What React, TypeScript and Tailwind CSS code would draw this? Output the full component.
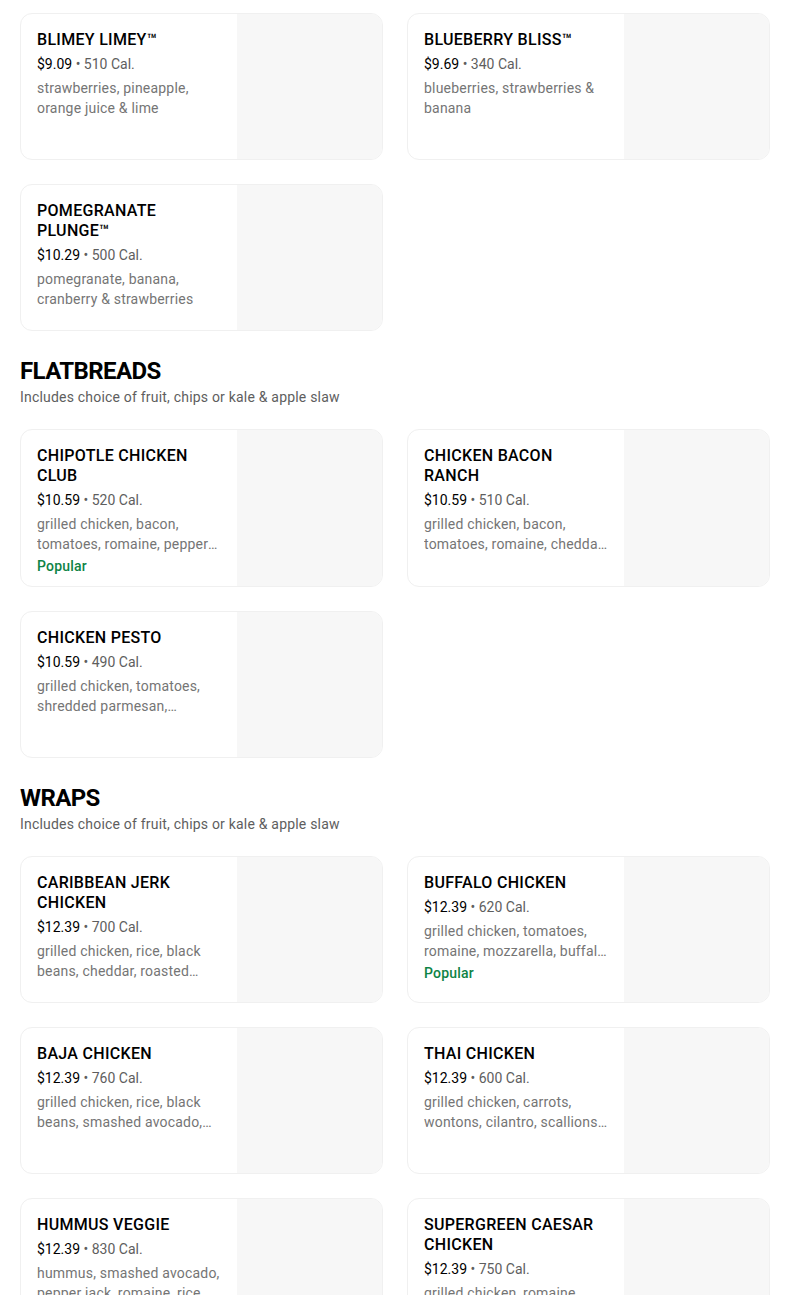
import React from "react";

type Item = { name: string; price: string; cal: string; desc: string; popular?: boolean };

const smoothies: Item[] = [
  { name: "BLIMEY LIMEY™", price: "$9.09", cal: "510 Cal.", desc: "strawberries, pineapple, orange juice & lime" },
  { name: "BLUEBERRY BLISS™", price: "$9.69", cal: "340 Cal.", desc: "blueberries, strawberries & banana" },
  { name: "POMEGRANATE PLUNGE™", price: "$10.29", cal: "500 Cal.", desc: "pomegranate, banana, cranberry & strawberries" },
];

const flatbreads: Item[] = [
  { name: "CHIPOTLE CHICKEN CLUB", price: "$10.59", cal: "520 Cal.", desc: "grilled chicken, bacon, tomatoes, romaine, pepper jack, chipotle mayo", popular: true },
  { name: "CHICKEN BACON RANCH", price: "$10.59", cal: "510 Cal.", desc: "grilled chicken, bacon, tomatoes, romaine, cheddar, ranch dressing" },
  { name: "CHICKEN PESTO", price: "$10.59", cal: "490 Cal.", desc: "grilled chicken, tomatoes, shredded parmesan, mozzarella, basil pesto" },
];

const wraps: Item[] = [
  { name: "CARIBBEAN JERK CHICKEN", price: "$12.39", cal: "700 Cal.", desc: "grilled chicken, rice, black beans, cheddar, roasted corn, jerk sauce" },
  { name: "BUFFALO CHICKEN", price: "$12.39", cal: "620 Cal.", desc: "grilled chicken, tomatoes, romaine, mozzarella, buffalo sauce, ranch", popular: true },
  { name: "BAJA CHICKEN", price: "$12.39", cal: "760 Cal.", desc: "grilled chicken, rice, black beans, smashed avocado, pico de gallo" },
  { name: "THAI CHICKEN", price: "$12.39", cal: "600 Cal.", desc: "grilled chicken, carrots, wontons, cilantro, scallions, thai peanut sauce" },
  { name: "HUMMUS VEGGIE", price: "$12.39", cal: "830 Cal.", desc: "hummus, smashed avocado, pepper jack, romaine, rice, cucumbers" },
  { name: "SUPERGREEN CAESAR CHICKEN", price: "$12.39", cal: "750 Cal.", desc: "grilled chicken, romaine, kale, parmesan, caesar dressing" },
];

function Card({ item }: { item: Item }) {
  return (
    <div className="flex min-h-[147px] overflow-hidden rounded-xl border border-[#f0f0f0] bg-white">
      <div className="flex min-w-0 flex-1 flex-col pl-4 pr-4 pt-4 pb-[10px]">
        <div className="text-[16px] font-medium leading-5 tracking-[0.3px] text-black">{item.name}</div>
        <div className="mt-1 text-[14px] leading-5">
          <span className="text-black">{item.price}</span>
          <span className="text-[#5e5e5e]"> • {item.cal}</span>
        </div>
        <div className="mt-1 line-clamp-2 text-[14px] leading-5 tracking-[0.2px] text-[#757575]">{item.desc}</div>
        {item.popular && (
          <div className="mt-0.5 text-[14px] font-medium leading-5 tracking-[0.2px] text-[#0e8345]">Popular</div>
        )}
      </div>
      <div className="w-[145px] shrink-0 bg-[#f7f7f7]" />
    </div>
  );
}

function Grid({ items }: { items: Item[] }) {
  return (
    <div className="grid grid-cols-2 gap-6">
      {items.map((it) => (
        <Card key={it.name} item={it} />
      ))}
    </div>
  );
}

function Section({ title, items }: { title: string; items: Item[] }) {
  return (
    <div className="mt-6">
      <h2 className="text-[24px] font-bold leading-8 tracking-tight text-black">{title}</h2>
      <p className="text-[14px] leading-5 tracking-[0.2px] text-[#5e5e5e]">Includes choice of fruit, chips or kale &amp; apple slaw</p>
      <div className="mt-[22px]">
        <Grid items={items} />
      </div>
    </div>
  );
}

export default function App() {
  return (
    <div className="min-h-screen bg-white" style={{ fontFamily: "Roboto, 'Noto Sans', sans-serif" }}>
      <div className="w-[750px] ml-5 pt-[13px] pb-10">
        <Grid items={smoothies} />
        <Section title="FLATBREADS" items={flatbreads} />
        <Section title="WRAPS" items={wraps} />
      </div>
    </div>
  );
}
